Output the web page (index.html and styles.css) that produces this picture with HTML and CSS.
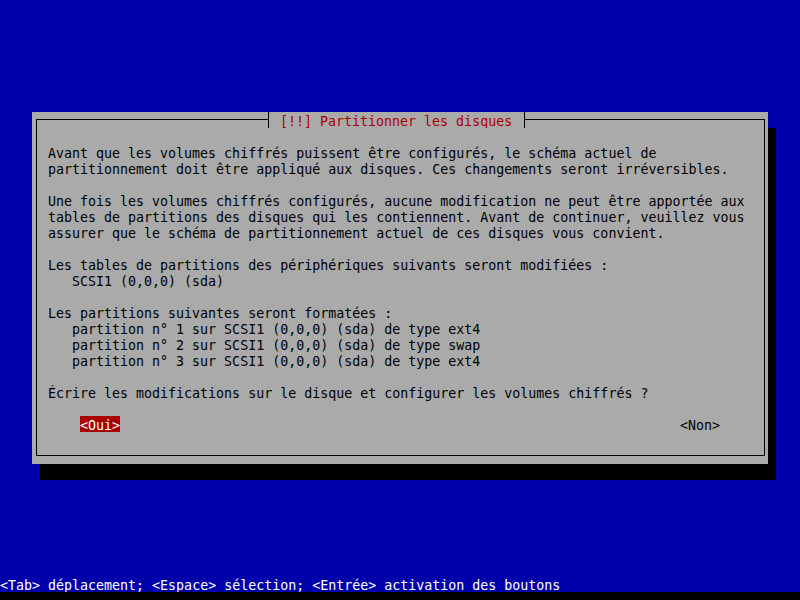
FILE: index.html
```html
<!DOCTYPE html>
<html lang="fr">
<head>
<meta charset="utf-8">
<title>Partitionner les disques</title>
<link rel="stylesheet" href="styles.css">
</head>
<body>
<div class="screen">
  <div class="dialog">
    <div class="title">[!!] Partitionner les disques</div>
    <div class="frame">
      <p class="para">Avant que les volumes chiffrés puissent être configurés, le schéma actuel de
partitionnement doit être appliqué aux disques. Ces changements seront irréversibles.</p>
      <p class="para">Une fois les volumes chiffrés configurés, aucune modification ne peut être apportée aux
tables de partitions des disques qui les contiennent. Avant de continuer, veuillez vous
assurer que le schéma de partitionnement actuel de ces disques vous convient.</p>
      <p class="para">Les tables de partitions des périphériques suivants seront modifiées :
   SCSI1 (0,0,0) (sda)</p>
      <p class="para">Les partitions suivantes seront formatées :
   partition n° 1 sur SCSI1 (0,0,0) (sda) de type ext4
   partition n° 2 sur SCSI1 (0,0,0) (sda) de type swap
   partition n° 3 sur SCSI1 (0,0,0) (sda) de type ext4</p>
      <p class="para">Écrire les modifications sur le disque et configurer les volumes chiffrés ?</p>
      <div class="buttons">
        <span class="btn btn-active">&lt;Oui&gt;</span>
        <span class="btn">&lt;Non&gt;</span>
      </div>
    </div>
  </div>
  <div class="status">&lt;Tab&gt; déplacement; &lt;Espace&gt; sélection; &lt;Entrée&gt; activation des boutons</div>
  <div class="bottom"></div>
</div>
</body>
</html>
```

FILE: styles.css
```css
html, body {
  margin: 0;
  padding: 0;
  background: #0000aa;
}

body {
  font-family: "DejaVu Sans Mono", "Liberation Mono", monospace;
  font-size: 13.3px;
  line-height: 16px;
  color: #000000;
}

.screen {
  width: 800px;
  height: 600px;
  display: flex;
  flex-direction: column;
  overflow: hidden;
}

.dialog {
  position: relative;
  margin: 112px 0 0 32px;
  width: 736px;
  height: 352px;
  background: #aaaaaa;
  box-shadow: 8px 16px 0 #000000;
  box-sizing: border-box;
  padding-top: 7px;
}

.title {
  position: absolute;
  left: 236px;
  top: 0;
  height: 16px;
  box-sizing: border-box;
  padding: 2px 12px 0 11px;
  overflow: hidden;
  border-left: 1px solid #000000;
  border-right: 1px solid #000000;
  background: #aaaaaa;
  color: #aa0000;
  white-space: pre;
}

.frame {
  margin-left: 4px;
  width: 729px;
  height: 337px;
  box-sizing: border-box;
  border: 1px solid #000000;
  padding: 26px 12px 0 11px;
}

.para {
  margin: 0 0 16px 0;
  white-space: pre;
}

.buttons {
  display: flex;
  justify-content: space-between;
  margin: -2px 32px 0 32px;
  height: 16px;
}

.btn {
  display: block;
  white-space: pre;
  height: 16px;
  box-sizing: border-box;
  padding-top: 2px;
  overflow: hidden;
}

.btn-active {
  background: #aa0000;
  color: #ffffff;
}

.status {
  margin-top: auto;
  height: 16px;
  box-sizing: border-box;
  padding-top: 2px;
  overflow: hidden;
  color: #ffffff;
  white-space: pre;
}

.bottom {
  height: 8px;
  background: #000000;
}
```
